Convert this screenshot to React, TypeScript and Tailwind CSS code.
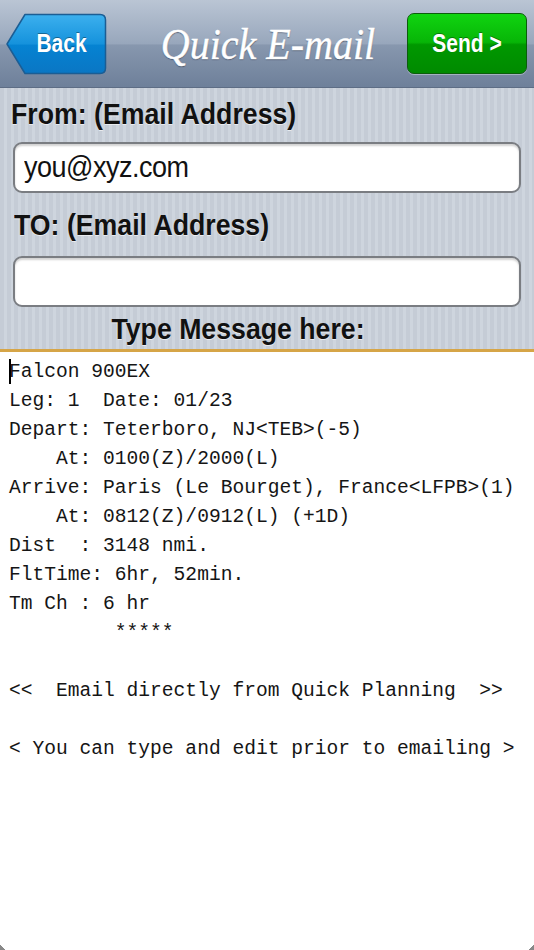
import React from "react";

const MESSAGE = `Falcon 900EX
Leg: 1  Date: 01/23
Depart: Teterboro, NJ<TEB>(-5)
    At: 0100(Z)/2000(L)
Arrive: Paris (Le Bourget), France<LFPB>(1)
    At: 0812(Z)/0912(L) (+1D)
Dist  : 3148 nmi.
FltTime: 6hr, 52min.
Tm Ch : 6 hr
         *****

<<  Email directly from Quick Planning  >>

< You can type and edit prior to emailing >`;

function BackButton() {
  return (
    <button className="relative h-[62px] w-[101px] shrink-0">
      <svg className="absolute inset-0" width="101" height="62" viewBox="0 0 101 62">
        <defs>
          <linearGradient id="backFill" x1="0" y1="0" x2="0" y2="1">
            <stop offset="0" stopColor="#3cb0ee" />
            <stop offset="0.5" stopColor="#1592dc" />
            <stop offset="0.52" stopColor="#0583d2" />
            <stop offset="1" stopColor="#0a76c4" />
          </linearGradient>
        </defs>
        <path
          d="M1 31 L19 1.5 H94 Q99.5 1.5 99.5 7 V55 Q99.5 60.5 94 60.5 H19 Z"
          fill="url(#backFill)"
          stroke="#1b5d94"
          strokeWidth="1.5"
          strokeLinejoin="round"
        />
      </svg>
      <span className="relative inline-block scale-y-[1.2] pl-[10px] text-[21px] font-bold text-white [font-family:'Liberation_Sans',Arial,sans-serif] [text-shadow:0_-1px_0_rgba(0,0,0,0.35)]">
        Back
      </span>
    </button>
  );
}

function SendButton() {
  return (
    <button className="h-[61px] w-[120px] shrink-0 rounded-[7px] border border-[#0b5e0b] bg-[linear-gradient(#10d410,#07b507_48%,#009800_52%,#008a00)] shadow-[0_1px_0_rgba(255,255,255,0.35)]">
      <span className="inline-block scale-y-[1.2] text-[21px] font-bold text-white [font-family:'Liberation_Sans',Arial,sans-serif] [text-shadow:0_-1px_0_rgba(0,0,0,0.35)]">
        Send &gt;
      </span>
    </button>
  );
}

function Field({ value }: { value: string }) {
  return (
    <div className="mx-[13px] flex h-[51px] items-center rounded-[9px] border-2 border-[#7a7d82] bg-white px-[9px] shadow-[inset_0_2px_2px_rgba(0,0,0,0.18)]">
      <span className="inline-block scale-y-[1.12] text-[27px] tracking-[-0.5px] text-[#111] [font-family:'Liberation_Sans',Arial,sans-serif]">
        {value}
      </span>
    </div>
  );
}

function Label({ children, className }: { children: React.ReactNode; className: string }) {
  return (
    <div className={`h-[32px] text-[26.7px] font-bold leading-[32px] text-[#111] [text-shadow:0_1px_0_rgba(255,255,255,0.6)] ${className}`}>
      <span className="inline-block scale-y-[1.12]">{children}</span>
    </div>
  );
}

export default function App() {
  return (
    <div className="flex h-[950px] w-[534px] flex-col overflow-hidden bg-white">
      <header className="flex h-[88px] shrink-0 items-center border-b border-[#5d6d85] bg-[linear-gradient(#bac5d4,#98a7bc_50%,#8797ae_52%,#6e809a)] pl-[6px] pr-[7px]">
        <BackButton />
        <h1 className="flex-1 pl-[22px] text-center [font-family:'Liberation_Serif','Times_New_Roman',serif]">
          <span className="inline-block scale-y-[1.12] text-[40px] italic text-white [text-shadow:0_1px_1px_rgba(40,50,70,0.7)] [-webkit-text-stroke:0.4px_white]">
            Quick E-mail
          </span>
        </h1>
        <SendButton />
      </header>

      <section className="shrink-0 bg-[repeating-linear-gradient(90deg,#c5ccd6_0px,#c5ccd6_4px,#ced5de_4px,#ced5de_7px)] pt-[10px] pb-[4px] [font-family:'Liberation_Sans',Arial,sans-serif]">
        <Label className="mb-[12px] pl-[11px]">From: (Email Address)</Label>
        <Field value="you@xyz.com" />
        <Label className="mt-[16px] mb-[15px] pl-[14px]">TO: (Email Address)</Label>
        <Field value="" />
        <Label className="mt-[6px] pr-[58px] text-center">Type Message here:</Label>
      </section>

      <div className="h-[3px] shrink-0 bg-[#d6a547]" />

      <div className="relative flex-1 bg-white">
        <pre className="pl-[9px] pt-[6px] text-[19.6px] leading-[29px] text-[#151515] [font-family:'Liberation_Mono','Courier_New',monospace]">
          {MESSAGE}
        </pre>
        <span className="absolute left-[9px] top-[7px] h-[25px] w-[2px] bg-black" />
        <span className="absolute bottom-0 left-0 h-[5px] w-[5px] bg-[linear-gradient(45deg,#888_50%,transparent_50%)]" />
        <span className="absolute bottom-0 right-0 h-[5px] w-[5px] bg-[linear-gradient(-45deg,#888_50%,transparent_50%)]" />
      </div>
    </div>
  );
}
